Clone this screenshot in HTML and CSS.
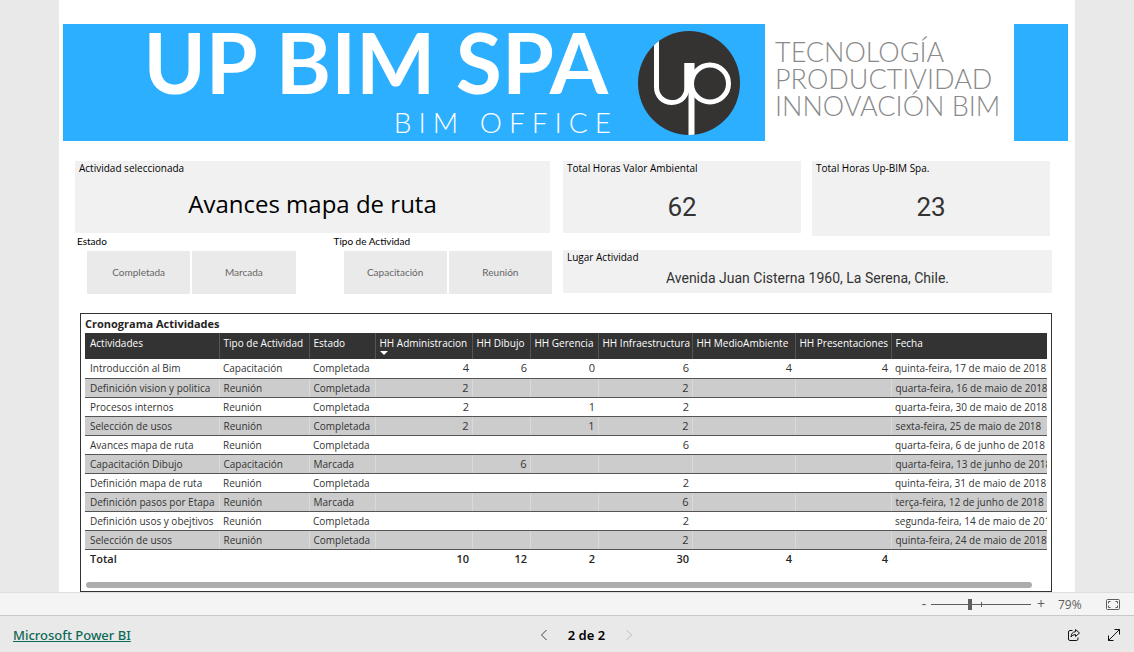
FILE: index.html
```html
<!DOCTYPE html>
<html lang="es">
<head>
<meta charset="utf-8">
<title>UP BIM SPA</title>
<link rel="stylesheet" href="styles.css">
</head>
<body>
<main class="stage">
  <div class="report">
    <header class="banner">
      <div class="brand">
        <div class="brand-text">
          <h1 class="brand-name">UP BIM SPA</h1>
          <p class="brand-sub">BIM OFFICE</p>
        </div>
        <svg class="brand-logo" viewBox="0 0 104 106" role="img" aria-label="up">
          <defs><clipPath id="disc"><ellipse cx="52" cy="53" rx="51" ry="52"/></clipPath></defs>
          <ellipse cx="52" cy="53" rx="51" ry="52" fill="#353331"/>
          <g clip-path="url(#disc)" fill="none" stroke="#fff">
            <path d="M19.500 0V57C19.500 66 26 72.500 35 72.500C44 72.500 50 66 50 57V33" stroke-width="5"/>
            <path d="M52.500 33V60" stroke-width="10"/>
            <path d="M54.500 52V106" stroke-width="6"/>
            <circle cx="73" cy="53.500" r="18.500" stroke-width="5" fill="#353331"/>
          </g>
        </svg>
      </div>
      <p class="tagline">TECNOLOGÍA<br>PRODUCTIVIDAD<br>INNOVACIÓN BIM</p>
      <div class="banner-end"></div>
    </header>

    <section class="summary">
      <div class="summary-left">
        <article class="card card-activity">
          <h2 class="card-title">Actividad seleccionada</h2>
          <p class="activity">Avances mapa de ruta</p>
        </article>
        <div class="slicers">
          <div class="slicer" role="group" aria-labelledby="s1">
            <h2 class="slicer-title" id="s1">Estado</h2>
            <div class="slicer-options"><button class="option">Completada</button><button class="option">Marcada</button></div>
          </div>
          <div class="slicer" role="group" aria-labelledby="s2">
            <h2 class="slicer-title" id="s2">Tipo de Actividad</h2>
            <div class="slicer-options"><button class="option">Capacitación</button><button class="option">Reunión</button></div>
          </div>
        </div>
      </div>
      <div class="summary-right">
        <div class="totals">
          <article class="card">
            <h2 class="card-title">Total Horas Valor Ambiental</h2>
            <p class="number">62</p>
          </article>
          <article class="card card-tall">
            <h2 class="card-title">Total Horas Up-BIM Spa.</h2>
            <p class="number">23</p>
          </article>
        </div>
        <article class="card card-place">
          <h2 class="card-title">Lugar Actividad</h2>
          <p class="place">Avenida Juan Cisterna 1960, La Serena, Chile.</p>
        </article>
      </div>
    </section>

    <section class="schedule">
      <h2 class="schedule-title">Cronograma Actividades</h2>
      <table class="grid">
        <colgroup><col class="c-act"><col class="c-type"><col class="c-state"><col class="c-adm"><col class="c-dib"><col class="c-ger"><col class="c-inf"><col class="c-med"><col class="c-pre"><col></colgroup>
        <thead>
          <tr><th>Actividades</th><th>Tipo de Actividad</th><th>Estado</th><th class="sorted" aria-sort="descending">HH Administracion</th><th>HH Dibujo</th><th>HH Gerencia</th><th>HH Infraestructura</th><th>HH MedioAmbiente</th><th>HH Presentaciones</th><th>Fecha</th></tr>
        </thead>
        <tbody>
          <tr><td>Introducción al Bim</td><td>Capacitación</td><td>Completada</td><td class="n">4</td><td class="n">6</td><td class="n">0</td><td class="n">6</td><td class="n">4</td><td class="n">4</td><td>quinta-feira, 17 de maio de 2018</td></tr>
          <tr><td>Definición vision y politica</td><td>Reunión</td><td>Completada</td><td class="n">2</td><td></td><td></td><td class="n">2</td><td></td><td></td><td>quarta-feira, 16 de maio de 2018</td></tr>
          <tr><td>Procesos internos</td><td>Reunión</td><td>Completada</td><td class="n">2</td><td></td><td class="n">1</td><td class="n">2</td><td></td><td></td><td>quarta-feira, 30 de maio de 2018</td></tr>
          <tr><td>Selección de usos</td><td>Reunión</td><td>Completada</td><td class="n">2</td><td></td><td class="n">1</td><td class="n">2</td><td></td><td></td><td>sexta-feira, 25 de maio de 2018</td></tr>
          <tr><td>Avances mapa de ruta</td><td>Reunión</td><td>Completada</td><td></td><td></td><td></td><td class="n">6</td><td></td><td></td><td>quarta-feira, 6 de junho de 2018</td></tr>
          <tr><td>Capacitación Dibujo</td><td>Capacitación</td><td>Marcada</td><td></td><td class="n">6</td><td></td><td></td><td></td><td></td><td>quarta-feira, 13 de junho de 2018</td></tr>
          <tr><td>Definición mapa de ruta</td><td>Reunión</td><td>Completada</td><td></td><td></td><td></td><td class="n">2</td><td></td><td></td><td>quinta-feira, 31 de maio de 2018</td></tr>
          <tr><td>Definición pasos por Etapa</td><td>Reunión</td><td>Marcada</td><td></td><td></td><td></td><td class="n">6</td><td></td><td></td><td>terça-feira, 12 de junho de 2018</td></tr>
          <tr><td>Definición usos y obejtivos</td><td>Reunión</td><td>Completada</td><td></td><td></td><td></td><td class="n">2</td><td></td><td></td><td>segunda-feira, 14 de maio de 2018</td></tr>
          <tr><td>Selección de usos</td><td>Reunión</td><td>Completada</td><td></td><td></td><td></td><td class="n">2</td><td></td><td></td><td>quinta-feira, 24 de maio de 2018</td></tr>
        </tbody>
        <tfoot>
          <tr><td>Total</td><td></td><td></td><td class="n">10</td><td class="n">12</td><td class="n">2</td><td class="n">30</td><td class="n">4</td><td class="n">4</td><td></td></tr>
        </tfoot>
      </table>
      <div class="scrollbar"></div>
    </section>
  </div>
</main>

<div class="zoombar">
  <button class="zoom-step" aria-label="Reducir">-</button>
  <input class="zoom-range" type="range" min="0" max="100" value="39" aria-label="Zoom">
  <button class="zoom-step" aria-label="Ampliar">+</button>
  <output class="zoom-value">79%</output>
  <button class="fit" aria-label="Ajustar a la página">
    <svg width="14" height="11" viewBox="0 0 14 11" fill="none" stroke="#605e5c"><rect x=".5" y=".5" width="13" height="10" rx="1"/><path d="M2.500 4.500V2.500H4.500M9.500 2.500H11.500V4.500M2.500 6.500V8.500H4.500M9.500 8.500H11.500V6.500"/></svg>
  </button>
</div>

<footer class="footer">
  <a class="product" href="#">Microsoft Power BI</a>
  <nav class="pager" aria-label="Páginas">
    <button class="icon-btn pager-btn" aria-label="Anterior"><svg width="8" height="12" viewBox="0 0 8 12" fill="none" stroke="#444"><path d="M6.500 1L1.500 6L6.500 11"/></svg></button>
    <span class="pager-label">2 de 2</span>
    <button class="icon-btn pager-btn" aria-label="Siguiente" disabled><svg width="8" height="12" viewBox="0 0 8 12" fill="none" stroke="#bdbdbd"><path d="M1.500 1L6.500 6L1.500 11"/></svg></button>
  </nav>
  <div class="actions">
    <button class="icon-btn" aria-label="Compartir"><svg width="14" height="14" viewBox="0 0 14 14" fill="none" stroke="#111" stroke-linejoin="round"><path d="M5.500 2.500H3Q1.500 2.500 1.500 4V11Q1.500 12.500 3 12.500H9.500Q11 12.500 11 11V9.500"/><path d="M8.500 1.500L12.500 5L8.500 8.500V6.500Q5.500 6.500 4 9Q4.300 4 8.500 3.700Z"/></svg></button>
    <button class="icon-btn" aria-label="Pantalla completa"><svg width="14" height="14" viewBox="0 0 14 14" fill="none" stroke="#111"><path d="M1.500 12.500L12.500 1.500M7.500 1.500H12.500V6.500M1.500 7.500V12.500H6.500"/></svg></button>
  </div>
</footer>
</body>
</html>
```
FILE: styles.css
```css
* { box-sizing: border-box; }

body {
  margin: 0;
  min-height: 100vh;
  display: flex;
  flex-direction: column;
  background: #e9e9e9;
  color: #000;
  font-family: "Open Sans", "Noto Sans", sans-serif;
  font-size: 10px;
}

h1, h2, p { margin: 0; font-weight: 400; }

button {
  border: 0;
  padding: 0;
  background: none;
  color: inherit;
  font: inherit;
}

.stage { flex: 1; padding: 0 59px; }

.report {
  height: 100%;
  padding: 24px 7px 0 4px;
  background: #fff;
}

/* Banner */
.banner {
  display: flex;
  height: 117px;
  font-family: Lato, sans-serif;
}

.brand {
  flex: 1;
  display: flex;
  justify-content: flex-end;
  gap: 29px;
  padding: 6px 24px 0 0;
  background: #2dafff;
  color: #fff;
}

.brand-text { text-align: right; }

.brand-name {
  font-size: 84px;
  font-weight: 700;
  line-height: 64px;
  white-space: nowrap;
}

.brand-sub {
  margin-right: -10px;
  font-size: 28px;
  font-weight: 300;
  line-height: 56px;
  letter-spacing: 7px;
}

.brand-logo { width: 104px; height: 106px; }

.tagline {
  width: 249px;
  padding: 14px 0 0 10px;
  color: #8a8a8a;
  font-size: 27px;
  font-weight: 300;
  line-height: 27px;
  white-space: nowrap;
}

.banner-end { width: 54px; background: #2dafff; }

/* Cards and slicers */
.summary {
  display: grid;
  grid-template-columns: 477fr 489fr;
  gap: 11px;
  padding: 20px 16px 0 12px;
}

.card { height: 72px; padding: 0 4px; background: #f1f1f1; }
.card-title { font-size: 10px; line-height: 14px; }
.card-activity { margin-right: 2px; }
.card-tall { height: 75px; }
.card-place { height: 43px; margin-top: 14px; }

.activity {
  font-size: 24px;
  line-height: 58px;
  text-align: center;
}

.number {
  color: #333;
  font-family: Roboto, sans-serif;
  font-size: 26px;
  line-height: 64px;
  text-align: center;
}

.place {
  color: #333;
  font-family: Roboto, sans-serif;
  font-size: 14px;
  line-height: 28px;
  text-align: center;
}

.totals {
  display: grid;
  grid-template-columns: 1fr 1fr;
  gap: 11px;
  padding-right: 2px;
}

.slicers {
  display: grid;
  grid-template-columns: 1fr 1fr;
  gap: 38px;
  padding: 0 0 0 2px;
}

.slicer-title {
  padding-bottom: 2px;
  font-family: Lato, sans-serif;
  font-size: 10px;
  line-height: 16px;
}

.slicer-options {
  display: grid;
  grid-template-columns: 1fr 1fr;
  gap: 2px;
  padding-left: 10px;
}

.option {
  height: 43px;
  padding-bottom: 2px;
  background: #eaeaea;
  color: #666;
  font-family: Lato, sans-serif;
  font-size: 10px;
}

/* Schedule table */
.schedule {
  height: 279px;
  margin: 19px 16px 0 17px;
  padding: 0 4px;
  border: 1px solid #333;
  overflow: hidden;
}

.schedule-title {
  color: #252423;
  font-size: 11px;
  font-weight: 700;
  line-height: 19px;
}

.grid {
  width: 100%;
  table-layout: fixed;
  border-collapse: collapse;
  color: #333;
}

.c-act { width: 134px; }
.c-type { width: 90px; }
.c-state { width: 66px; }
.c-adm { width: 97px; }
.c-dib { width: 58px; }
.c-ger { width: 68px; }
.c-inf { width: 94px; }
.c-med { width: 103px; }
.c-pre { width: 96px; }

.grid th,
.grid td {
  height: 19px;
  padding: 0 3px 0 4px;
  overflow: hidden;
  font-size: 10px;
  line-height: 18px;
  text-align: left;
  white-space: nowrap;
}

.grid th:first-child,
.grid td:first-child { padding-left: 5px; }
.grid td:last-child { padding-right: 0; }
.grid .n { font-size: 11px; text-align: right; }

.grid th {
  position: relative;
  height: 26px;
  border-right: 1px solid #555;
  background: #333;
  color: #fff;
  font-weight: 400;
  line-height: 20px;
  vertical-align: top;
}

.grid th:last-child { border-right: 0; }

.sorted::after {
  content: "";
  position: absolute;
  left: 4px;
  bottom: 4px;
  border: 4px solid transparent;
  border-top-color: #fff;
  border-bottom: 0;
}

.grid tbody td { border-bottom: 1px solid #555; }
.grid tbody tr:nth-child(even) td { border-right: 1px solid #dadada; background: #ccc; }
.grid tbody tr:nth-child(even) td:last-child { border-right: 0; }
.grid tfoot td { color: #252423; font-size: 11px; font-weight: 600; }

.scrollbar {
  height: 6px;
  margin: 14px 15px 0 1px;
  border-radius: 3px;
  background: #adadad;
}

/* Zoom bar */
.zoombar {
  display: flex;
  align-items: center;
  justify-content: flex-end;
  height: 24px;
  padding-right: 14px;
  border-top: 1px solid #dedede;
  border-bottom: 1px solid #c8c8c8;
  background: #f4f4f4;
  color: #605e5c;
}

.zoom-step { width: 14px; font-size: 14px; line-height: 20px; }

.zoom-range {
  width: 100px;
  height: 12px;
  margin: 0 3px 0 0;
  appearance: none;
  background:
    linear-gradient(#605e5c, #605e5c) center / 1px 5px no-repeat,
    linear-gradient(#605e5c, #605e5c) center / 100% 1px no-repeat;
}

.zoom-range::-webkit-slider-thumb {
  appearance: none;
  width: 4px;
  height: 11px;
  background: #605e5c;
}

.zoom-value { width: 32px; margin-left: 10px; font-size: 12px; }
.fit { display: flex; margin-left: 16px; }

/* Footer */
.footer {
  display: flex;
  align-items: center;
  justify-content: space-between;
  height: 36px;
  padding: 2px 0 0 13px;
  font-family: "Noto Sans", sans-serif;
}

.product { color: #0d6957; font-size: 13px; font-weight: 500; }

.pager { display: flex; align-items: center; }
.pager-label { font-size: 13px; font-weight: 600; }

.icon-btn {
  display: flex;
  align-items: center;
  justify-content: center;
  width: 40px;
  height: 34px;
}

.pager-btn { width: 48px; }
.actions { display: flex; padding-left: 12px; }
```
